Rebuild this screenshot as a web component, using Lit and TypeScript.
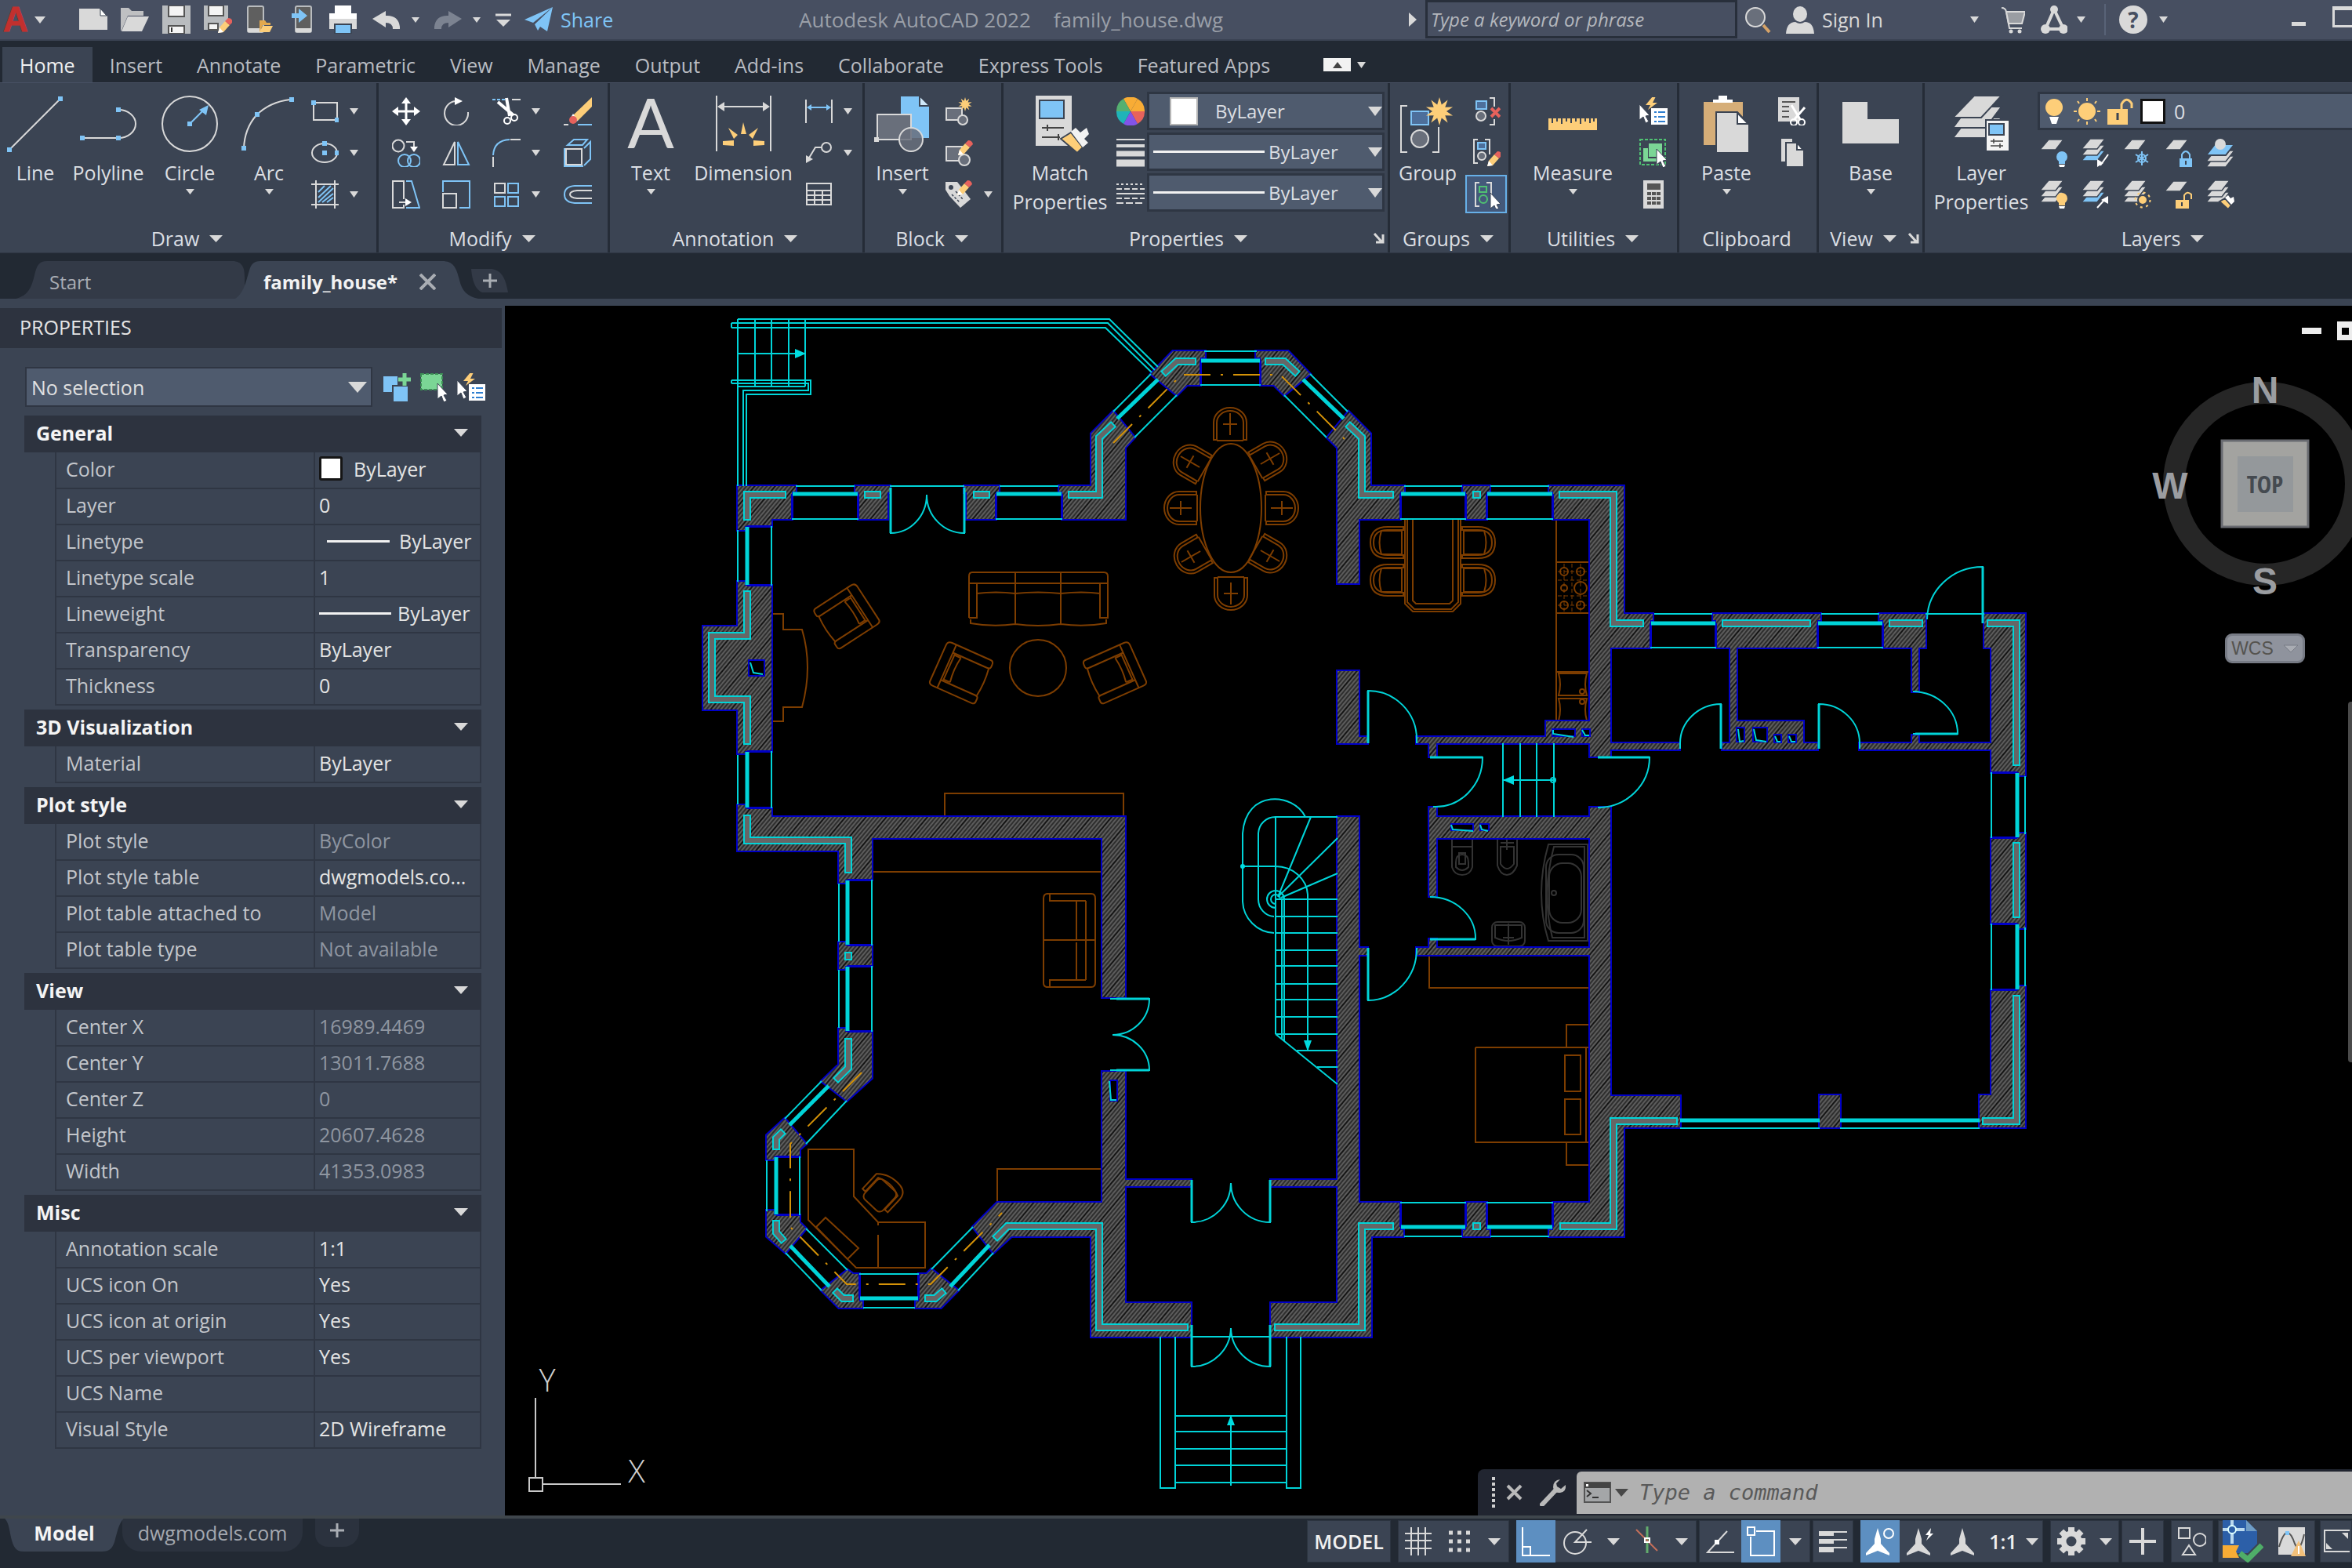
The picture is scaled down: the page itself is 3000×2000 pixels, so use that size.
import { LitElement, html, svg, css, nothing } from "lit";
import { customElement, state } from "lit/decorators.js";

const G = "#d9d9d9";
const B = "#7fc4f6";
const Y = "#fdce79";
const R = "#e6625c";
const N = "#63ad6d";
const M = "#696f7b";
const D = "#3b4453";

const icon = (body: unknown, w = 36, h = w) =>
  html`<svg class="icon" width=${w} height=${h} viewBox="0 0 ${w} ${h}" fill="none" stroke=${G} stroke-width="2" aria-hidden="true">${body}</svg>`;

const sq = (x: number, y: number) => svg`<rect x=${x - 3} y=${y - 3} width="6" height="6" fill=${B} stroke="none"/>`;
const arrow = (w = 12, h = 8) =>
  html`<svg class="arrow" width=${w} height=${h} viewBox="0 0 12 8" preserveAspectRatio="none" aria-hidden="true"><path d="M0 0H12L6 8Z" fill=${G}/></svg>`;
const cursor = (x: number, y: number) =>
  svg`<path transform="translate(${x} ${y})" d="M0 0L13 14L8 15L12 22L8 24L5 16L0 20Z" fill="#fff" stroke=${D} stroke-width="1"/>`;
const pencil = (x: number, y: number) =>
  svg`<g transform="translate(${x} ${y})" stroke="none"><path d="M0 18L2 11L9 3L15 8L7 17Z" fill=${Y}/><path d="M9 3L13 -1Q18 -1 19 4L15 8Z" fill=${R}/><path d="M0 18L2 11L7 17Z" fill="#fff"/></g>`;
const burst = (x: number, y: number, r: number) => {
  const pts = Array.from({ length: 20 }, (_, i) => {
    const a = (i * Math.PI) / 10 - Math.PI / 2;
    const k = i % 2 ? r * 0.5 : r;
    return `${(x + k * Math.cos(a)).toFixed(1)},${(y + k * Math.sin(a)).toFixed(1)}`;
  }).join(" ");
  return svg`<polygon points=${pts} fill=${Y} stroke="none"/>`;
};
const sheet = (y: number, fill = G) => svg`<path d="M11 ${y}H30L20 ${y + 13}H0Z" fill=${fill} stroke=${D} stroke-width="1.5"/>`;
const stack = (last = G) => svg`${sheet(15, last)}${sheet(8)}${sheet(0)}`;
const bulb = (x: number, y: number, fill: string) =>
  svg`<g stroke="none"><circle cx=${x} cy=${y} r="7" fill=${fill}/><rect x=${x - 4} y=${y + 5} width="8" height="4" fill=${fill}/><path d="M${x - 4} ${y + 10}h8l-2 6h-4z" fill="#fff"/></g>`;

const large = {
  line: svg`<path d="M3 69L68 4"/>${sq(3, 69)}${sq(68, 4)}`,
  polyline: svg`<path d="M3 54H49A22 18 0 0 0 49 18"/>${sq(3, 54)}${sq(49, 54)}${sq(49, 18)}`,
  circle: svg`<circle cx="36" cy="36" r="35"/><path d="M36 36L54 18" stroke=${B}/><path d="M60 12L57 25L48 18Z" fill=${B} stroke="none"/>${sq(36, 36)}`,
  arc: svg`<path d="M4 67Q5 42 20 25Q37 8 63 5"/>${sq(4, 67)}${sq(21, 24)}${sq(65, 5)}`,
  text: svg`<text x="36" y="67" text-anchor="middle" class="big-a">A</text>`,
  dimension: svg`<path d="M2 0V71M71 0V71M6 14H67"/><path d="M3 14L12 8V20ZM70 14L61 8V20Z" fill=${G} stroke="none"/><path d="M36 34L40 49H33ZM17 41L29 50L24 55ZM55 41L43 50L48 55ZM10 58L24 57V64L10 63ZM63 58L49 57V64L63 63Z" fill=${Y} stroke="none"/>`,
  insert: svg`<path d="M33 0H58L71 13V55H33Z" fill=${B} stroke=${D}/><path d="M58 0V13H71Z" fill="#cfe8f9" stroke=${D}/><rect x="4" y="24" width="43" height="32" fill=${M}/><rect x="0" y="53" width="6" height="6" fill=${G} stroke="none"/><circle cx="47" cy="56" r="15" fill=${M} fill-opacity=".85"/>`,
  match: svg`<rect x="5" y="0" width="46" height="64" fill=${G} stroke="none"/><rect x="10" y="6" width="31" height="23" fill=${B} stroke=${D}/><path d="M13 41H41M20 37V45M13 53H36M34 49V57" stroke="#444"/><path d="M37 55L50 47L65 66L58 73Z" fill=${Y} stroke=${D}/><path d="M50 46L56 41L62 47L70 41L73 49L67 55L72 60L65 66Z" fill="#f2f2f2" stroke="none"/>`,
  group: svg`<path d="M10 13H2V72H10M42 72H50V40"/><rect x="15" y="20" width="22" height="17" fill="#4d6f9b" stroke=${B}/>${burst(51, 20, 18)}<circle cx="26" cy="55" r="11" fill=${M}/>`,
  measure: svg`<rect x="5" y="29" width="62" height="15" fill=${Y} stroke="none"/><path d="M10 29v6M16 29v4M22 29v7M28 29v4M34 29v6M40 29v4M46 29v7M52 29v4M58 29v6M63 29v4" stroke=${D}/>`,
  paste: svg`<path d="M7 8H57V63H7Z" fill="#d6ae78" stroke="none"/><path d="M19 9V5H26V0H37V5H44V9Z" fill="#fff" stroke="none"/><path d="M23 21H50L65 37V73H23Z" fill=${G} stroke=${D}/><path d="M50 22V36H64Z" fill="#fff" stroke=${D}/>`,
  base: svg`<path d="M0 8H32V30H72V61H0Z" fill=${G} stroke="none"/>`,
  layers: svg`<g stroke=${D} fill=${G}><path d="M20 28H62L42 54H0Z"/><path d="M20 14H62L42 41H0Z"/><path d="M27 0H62L36 28H0Z"/></g><rect x="42" y="31" width="30" height="40" fill="#f4f4f4" stroke=${D}/><rect x="46" y="36" width="19" height="14" fill=${B} stroke=${D}/><path d="M48 58H64M52 55V61M48 64H64M60 61V67" stroke="#444" stroke-width="1.5"/>`,
};

const small = {
  rect: svg`<rect x="4" y="7" width="30" height="22"/>${sq(4, 7)}${sq(34, 29)}`,
  ellipse: svg`<ellipse cx="18" cy="18" rx="16" ry="12"/>${sq(18, 6)}${sq(34, 18)}${sq(18, 18)}`,
  hatch: svg`<path d="M7 0V36M31 0V36M1 5H36M1 31H36"/><path d="M10 15L18 7M10 22L26 7M10 28L29 10M15 28L29 17M21 28L29 22" stroke=${B}/>`,
  move: svg`<path d="M18 5V31M5 18H31" stroke="#fff" stroke-width="3"/><path d="M18 0L24 8H12ZM18 36L24 28H12ZM0 18L8 12V24ZM36 18L28 12V24Z" fill="#fff" stroke="none"/>`,
  rotate: svg`<path d="M17 5A15 15.500 0 1 0 33 19"/><path d="M16 0L26 5L16 10Z" fill="#fff" stroke="none"/>`,
  trim: svg`<path d="M0 3H18" stroke=${B} stroke-dasharray="4 2"/><path d="M25 3H36"/><path d="M18 1L22 24M7 6L27 23" stroke="#fff" stroke-width="4"/><circle cx="19" cy="30" r="4" stroke="#fff"/><circle cx="28" cy="26" r="4" stroke="#fff"/>`,
  erase: svg`<path d="M0 35H6"/><path d="M18 35H36" stroke=${B}/><path d="M36 0V12L18 30L12 23Z" fill=${Y} stroke="none"/><path d="M12 21L18 30L14 32L9 26Z" fill="#fff" stroke="none"/><circle cx="12" cy="29" r="5" fill=${R} stroke="none"/>`,
  copy: svg`<circle cx="8" cy="9" r="7.500"/><path d="M18 4H28V10"/><path d="M28 17L23 10H33Z" fill="#fff" stroke="none"/><circle cx="16" cy="28" r="8" stroke=${B}/><circle cx="28" cy="28" r="8" stroke=${B}/>`,
  mirror: svg`<path d="M16 4V33H2Z"/><path d="M20 4V33H34Z" stroke=${B}/>`,
  fillet: svg`<path d="M1 23V36M23 1H36"/><path d="M1 21Q2 2 22 1" stroke=${B}/>`,
  box: svg`<rect x="3" y="13" width="20" height="20"/><path d="M0 35H25M1 12V34M5 8L13 1H30L24 8ZM26 12L34 4V26L26 34" stroke=${B}/>`,
  stretch: svg`<path d="M15 24V1H1V35H15V31M9 28H18"/><path d="M17 23L25 28L17 33Z" fill="#fff" stroke="none"/><path d="M18 1H25L35 35H18" stroke=${B}/>`,
  scale: svg`<path d="M1 15V1H35V35H22" stroke=${B}/><rect x="1" y="17" width="17" height="18"/>`,
  array: svg`<rect x="3" y="4" width="13" height="12"/><g stroke=${B}><rect x="20" y="4" width="13" height="12"/><rect x="3" y="21" width="13" height="12"/><rect x="20" y="21" width="13" height="12"/></g>`,
  offset: svg`<path d="M36 7H14Q1 8 1 18T14 29H36" stroke=${B}/><path d="M36 13H17Q8 14 8 18T17 23H36"/>`,
  linear: svg`<path d="M2 3V33M35 3V33"/><path d="M6 13H31" stroke=${B}/><path d="M3 13L9 9V17ZM34 13L28 9V17Z" fill=${B} stroke="none"/>`,
  leader: svg`<circle cx="28" cy="11" r="6"/><path d="M22 11H14L5 26"/><path d="M2 31V21L11 26Z" fill=${G} stroke="none"/>`,
  table: svg`<rect x="3" y="4" width="31" height="27"/><path d="M3 13H34M3 19H34M3 25H34M13 13V31M23 13V31"/>`,
  blockNew: svg`<rect x="2" y="14" width="20" height="15" fill=${M}/>${burst(26, 9, 9)}<circle cx="23" cy="29" r="6" fill=${M}/>`,
  blockEdit: svg`<rect x="2" y="10" width="20" height="18" fill=${M}/><circle cx="25" cy="27" r="7" fill=${M}/>${pencil(17, 3)}`,
  tag: svg`<path d="M1 2H16L33 24L20 35L6 20L1 12Z" fill=${G} stroke="none"/><circle cx="8" cy="9" r="3" fill=${D} stroke="none"/><path d="M9 18l10 10M14 14l9 10" stroke=${D} stroke-width="1.5" stroke-dasharray="3 2"/>${pencil(16, 1)}`,
  wheel: svg`<g stroke="none"><path d="M18 18L9 2A18 18 0 0 1 27 2Z" fill="#f8ac35"/><path d="M18 18L27 2A18 18 0 0 1 36 18Z" fill="#f8ac35"/><path d="M18 18H36A18 18 0 0 1 27 34Z" fill=${R}/><path d="M18 18L27 34A18 18 0 0 1 9 34Z" fill="#8254e8"/><path d="M18 18L9 34A18 18 0 0 1 0 18Z" fill="#1fb4b8"/><path d="M18 18H0A18 18 0 0 1 9 2Z" fill="#55b070"/></g>`,
  weights: svg`<path d="M0 1H36"/><path d="M0 9H36" stroke-width="4"/><path d="M0 19H36" stroke-width="7"/><path d="M0 31H36" stroke-width="9"/>`,
  types: svg`<path d="M0 5H36" stroke-dasharray="3 3"/><path d="M0 11H36M0 23H36" stroke-dasharray="7 3"/><path d="M0 17H36"/><path d="M0 29H36" stroke-dasharray="9 3"/>`,
  ungroup: svg`<rect x="5" y="5" width="13" height="10" fill="#4d6f9b" stroke=${B}/><circle cx="11" cy="24" r="6" fill=${M}/><path d="M22 1H28V12M28 28V35H22"/><path d="M24 14L35 25M35 14L24 25" stroke=${R} stroke-width="4"/>`,
  groupEdit: svg`<path d="M7 1H2V31H7M16 1H22V20"/><rect x="7" y="5" width="10" height="8" fill="#4d6f9b" stroke=${B}/><circle cx="12" cy="22" r="5" fill=${M}/>${pencil(19, 17)}`,
  groupPick: svg`<path d="M9 3H4V33H9M18 3H24V20"/><rect x="9" y="8" width="9" height="7" stroke="#4fc172"/><circle cx="14" cy="24" r="5" stroke="#4fc172"/>${cursor(23, 16)}`,
  quick: svg`<path d="M14 0L5 11H11L8 17L20 8H14L18 0Z" transform="translate(3 -1)" fill=${Y} stroke="none"/>${cursor(0, 9)}<rect x="15" y="14" width="21" height="21" fill="#fff" stroke="none"/><path d="M19 19h3M19 25h3M19 31h3M24 19h9M24 25h9M24 31h9" stroke="#2f7fd0"/>`,
  selectAll: svg`<rect x="1" y="1" width="32" height="32" stroke="#4fc172" stroke-dasharray="4 2"/><path d="M5 12H11V25H22V29H5Z" fill="#7bd695" stroke="none"/><rect x="12" y="6" width="17" height="17" fill="#7bd695" stroke="none"/>${cursor(22, 13)}`,
  calc: svg`<rect x="5" y="0" width="26" height="36" fill=${G} stroke="none"/><rect x="10" y="4" width="17" height="8" fill="#555" stroke="none"/><path d="M10 17H27M10 23H27M10 29H27" stroke="#555" stroke-width="4" stroke-dasharray="5 1"/>`,
  cut: svg`<rect x="0" y="0" width="27" height="31" fill=${G} stroke="none"/><path d="M5 6H22M5 12H14M5 18H14M5 25H14" stroke="#555"/><path d="M17 10L28 28M34 13L21 28" stroke="#fff" stroke-width="3"/><circle cx="20" cy="32" r="4" stroke="#fff"/><circle cx="30" cy="32" r="4" stroke="#fff"/>`,
  copyClip: svg`<path d="M4 0H18V5H9V29H4Z" fill=${G} stroke="none"/><path d="M10 5H24L33 15V36H10Z" fill=${G} stroke=${D}/><path d="M24 5V14H32Z" fill="#fff" stroke=${D}/>`,
  layOff: svg`${sheet(1)}${bulb(28, 23, B)}`,
  layIso: svg`${stack(B)}<path d="M34 20L24 34" stroke="#fff"/><path d="M20 36V26L28 31Z" fill="#fff" stroke="none"/>`,
  layFreeze: svg`${sheet(1)}<path d="M24 16V34M16 20L32 30M32 20L16 30" stroke=${B}/><circle cx="24" cy="25" r="5" stroke=${B}/>`,
  layLock: svg`${sheet(1)}<rect x="19" y="25" width="16" height="11" fill=${B} stroke="none"/><path d="M22 25V20Q27 12 32 20V25" stroke=${B}/><path d="M27 28V33" stroke=${D}/>`,
  layCurrent: svg`<g fill=${G} stroke=${D} stroke-width="1.500"><path d="M11 22H36L25 36H0Z"/><path d="M11 15H36L25 29H0Z"/></g><path d="M11 7H36L25 21H0Z" fill=${B} stroke=${D}/><circle cx="18" cy="7" r="7" fill=${G} stroke="none"/>`,
  layOn: svg`${stack()}${bulb(28, 23, Y)}`,
  layUniso: svg`${stack(B)}<path d="M20 35L30 24" stroke="#fff"/><path d="M34 20V30L25 25Z" fill="#fff" stroke="none"/>`,
  layThaw: svg`${stack()}<circle cx="25" cy="25" r="6" fill=${Y} stroke=${D}/><circle cx="25" cy="25" r="9.500" stroke=${Y} stroke-dasharray="3 4.500"/>`,
  layUnlock: svg`${sheet(1)}<rect x="14" y="25" width="17" height="11" fill=${Y} stroke="none"/><path d="M25 25V19Q29 13 34 18V24" stroke=${Y}/><path d="M22 28V33" stroke=${D}/>`,
  layMatch: svg`${stack()}<path d="M17 27L24 23L32 32L28 37Z" fill=${Y} stroke=${D}/><path d="M24 22L28 19L31 23L35 21L36 27L32 31Z" fill="#fff" stroke="none"/>`,
};

const title = {
  new: svg`<path d="M0 4H26L36 14V31H0Z" fill=${G} stroke="none"/><path d="M27 4V13H35Z" fill="#fff" stroke=${D} stroke-width="1"/>`,
  open: svg`<path d="M0 32V3H10L14 7H29V13H9L1 32Z" fill="#bfc0c2" stroke="none"/><path d="M9 14H36L27 33H1Z" fill=${G} stroke="none"/>`,
  save: svg`<path d="M0 0H36V36H0Z" fill="#b9bcbf" stroke="none"/><rect x="8" y="0" width="20" height="14" fill="#f4f4f4" stroke="#555"/><rect x="8" y="26" width="20" height="10" fill="#f4f4f4" stroke="#555"/><path d="M12 28V34" stroke="#333"/>`,
  saveAs: svg`<path d="M0 0H31V20L18 31H0Z" fill="#b9bcbf" stroke="none"/><rect x="6" y="0" width="19" height="13" fill="#f4f4f4" stroke="#555"/><rect x="6" y="23" width="12" height="8" fill="#f4f4f4" stroke="#555"/>${pencil(18, 17)}`,
  mobileOpen: svg`<rect x="3" y="1" width="20" height="33" rx="2" fill="#5f5f5f" stroke="#b9bcbf"/><path d="M3 29H20V34H3Z" fill=${G} stroke="none"/><path d="M18 19H25L27 22H32V25H22L18 34Z" fill="#e2a84e" stroke="none"/><path d="M22 26H35L31 34H18Z" fill=${Y} stroke="none"/>`,
  mobileSave: svg`<rect x="11" y="1" width="20" height="33" rx="2" fill="#5f5f5f" stroke="#b9bcbf"/><path d="M11 29H31V34H11Z" fill=${G} stroke="none"/><path d="M6 10H15V4L26 13L15 22V16H6Z" fill=${B} stroke="none"/>`,
  print: svg`<rect x="8" y="0" width="21" height="12" fill="#fff" stroke="none"/><rect x="1" y="10" width="36" height="20" fill=${G} stroke="none"/><path d="M1 10H37V17H1Z" fill="#fff" stroke="none"/><rect x="8" y="24" width="21" height="12" fill=${B} stroke=${D}/>`,
  undo: svg`<path d="M0 17L17 7V13Q33 12 35 27V30H26Q26 22 17 22V28Z" fill=${G} stroke="none"/>`,
  redo: svg`<path d="M36 17L19 7V13Q3 12 1 27V30H10Q10 22 19 22V28Z" fill="#7c8391" stroke="none"/>`,
  menu: svg`<path d="M0 12H20" stroke-width="3"/><path d="M1 18H19L10 27Z" fill=${G} stroke="none"/>`,
  share: svg`<path d="M36 2L0 18L11 22ZM36 2L13 24L17 32L20 27L29 33Z" fill=${B} stroke="none"/>`,
  search: svg`<circle cx="13" cy="15" r="12" fill=${M}/><path d="M23 25L31 34" stroke="#d6a368" stroke-width="4"/>`,
  user: svg`<ellipse cx="18" cy="11" rx="9" ry="10" fill=${G} stroke="none"/><path d="M0 36Q1 21 12 21Q18 25 24 21Q35 21 36 36Z" fill=${G} stroke="none"/>`,
  cart: svg`<path d="M0 4Q5 4 6 9L10 30H26"/><path d="M6 9H30L26 24H9Z" fill="#9a9da3"/><circle cx="12" cy="34" r="2.500" fill=${G} stroke="none"/><circle cx="23" cy="34" r="2.500" fill=${G} stroke="none"/>`,
  apps: svg`<path d="M17 6L6 31H29Z" stroke-width="4"/><circle cx="17" cy="6" r="5" fill=${G} stroke="none"/><circle cx="6" cy="31" r="6" fill=${G} stroke="none"/><circle cx="29" cy="31" r="6" fill=${G} stroke="none"/>`,
};

const chevronBox = html`<svg width="10" height="18" viewBox="0 0 10 18" aria-hidden="true"><path d="M0 0L10 9L0 18Z" fill=${G} /></svg>`;

const launcher = icon(svg`<path d="M2 2L11 12M13 3V13H4" stroke-width="3"/>`, 16);

/* One ribbon tool with a caption under its picture. */
const tool = (cls: string, body: unknown, lines: string[], menu = false) =>
  html`<button class="tool ${cls}">${icon(body, 72)}<span class="cap">${lines.map((l) => html`<span>${l}</span>`)}</span>${menu ? arrow(11, 7) : nothing}</button>`;
const mini = (name: string, body: unknown, active = false) =>
  html`<button class=${active ? "mini active" : "mini"} aria-label=${name}>${icon(body)}</button>`;
const drop = (name: string) => html`<button class="drop" aria-label="${name} options">${arrow(11, 8)}</button>`;

const panel = (cls: string, name: string, content: unknown, menu = true, launch = false) => html`
  <section class="panel ${cls}">
    <div class="tools">${content}</div>
    <div class="panel-foot">
      <button class="panel-title">${name}${menu ? arrow(17, 9) : nothing}</button>
      ${launch ? html`<button class="launch" aria-label="${name} settings">${launcher}</button>` : nothing}
    </div>
  </section>`;

/* ---------- Floor plan ---------- */

const walls = [
  "M941 620H1015V627H1010V662H984V671H950V676H941Z",
  "M1091 620H1135V628H1132V662H1095V627H1091Z",
  "M1230 620H1274V627H1270V662H1233V628H1230Z",
  "M1351 620H1392V553L1420 525L1447 558L1435 571V662H1355V627H1351Z",
  "M1496 448H1537V456H1531V491H1514L1501 504L1468 477Z",
  "M1643 448H1602V456H1608V491H1625L1638 504L1671 477Z",
  "M1720 525L1748 553V620H1791V627H1786V662H1733V744H1706V571L1693 558Z",
  "M1866 620H1900V627H1896V662H1870V627H1866Z",
  "M1976 620H2071V783H2108V791H2105V826H2054V965H2028V662H1981V627H1976Z",
  "M2185 783H2322V791H2318V826H2189V791H2185Z",
  "M2397 783H2456V826H2402V791H2397Z",
  "M2531 783H2583V989H2575V985H2540V826H2531Z",
  "M2583 1063V1184H2575V1178H2540V1069H2575V1063Z",
  "M2583 1258V1438H2525V1397H2540V1263H2575V1258Z",
  "M2321 1397H2347V1438H2321Z",
  "M2028 1030H2054V1398H2143V1438H2071V1577H1976V1569H1981V1534H2028Z",
  "M1870 1534H1896V1569H1900V1577H1866V1569H1870Z",
  "M1706 1042H1733V1534H1786V1569H1790V1577H1749V1705H1621V1662H1706Z",
  "M1406 1367H1435V1662H1519V1705H1392V1577H1290L1267 1598L1241 1565L1272 1534H1406Z",
  "M941 1027H950V1031H984V1042H1435V1272H1406V1069H1112V1122H1078V1126H1070V1085H941Z",
  "M1070 1202H1078V1206H1112V1232H1078V1236H1070Z",
  "M1070 1312H1078V1316H1112V1375L1080 1404L1048 1379L1070 1358Z",
  "M1001 1427L1028 1459L1020 1466V1475H987V1479H978V1448Z",
  "M978 1544H987V1550H1020V1559L1028 1567L1002 1598L978 1577Z",
  "M1081 1620L1088 1625H1096V1660H1100V1668H1070L1048 1646Z",
  "M1188 1619L1182 1625H1172V1660H1168V1668H1200L1222 1646Z",
  "M941 742H950V747H984V958H950V961H941V905H897V799H941Z",
  "M1706 856H1733V940H1744V948H1706Z",
  "M1807 940H1972V920H2028V948H1832V965H1823V948H1807Z",
  "M2054 948H2142V956H2054Z",
  "M2207 826H2215V920H2300V948H2318V956H2197V948H2207Z",
  "M2372 948H2439V938H2447V948H2540V956H2372Z",
  "M2439 826H2447V882H2439Z",
  "M1823 1030H1832V1042H2028V1069H1832V1143H1823Z",
  "M1807 1209H1823V1198H1832V1209H2028V1218H1807Z",
  "M1733 1209H1744V1218H1733Z",
  "M1435 1505H1519V1513H1435Z",
  "M1621 1505H1706V1513H1621Z",
].join("");

const insulation = [
  "M998 631H953V659", "M1107 631H1119", "M1246 631H1258", "M1367 631H1402V558L1417 544",
  "M1487 474L1501 461H1521", "M1652 474L1638 461H1618", "M1722 544L1737 558V631H1773",
  "M1883 631h1", "M1993 631H2058V795H2092", "M2201 795H2305", "M2414 795H2448",
  "M2539 795H2572V972", "M2572 1079V1166", "M2572 1274V1430H2533", "M2135 1430H2058V1564H1994",
  "M1883 1564h1", "M1773 1564H1737V1693H1630", "M1511 1693H1402V1564H1285L1272 1577",
  "M953 1044V1072H1082V1109", "M1082 1219v1", "M1082 1329V1362L1069 1375", "M996 1446L990 1452V1462",
  "M990 1561V1572L997 1580", "M1068 1649L1075 1656H1084", "M1184 1656H1193L1201 1649",
  "M953 758V811H908V892H953V945",
].join("");

/* Horizontal windows: left, right, outer face, glass, inner face. */
const windowsH = [
  [1010, 1095, 620, 630, 662], [1270, 1355, 620, 630, 662], [1531, 1608, 448, 460, 491],
  [1786, 1870, 620, 630, 662], [1896, 1981, 620, 630, 662], [2105, 2189, 783, 795, 826],
  [2318, 2402, 783, 795, 826], [1786, 1870, 1577, 1565, 1534], [1896, 1981, 1577, 1565, 1534],
  [1096, 1172, 1668, 1656, 1625],
];
/* Vertical windows: top, bottom, outer face, glass, inner face. */
const windowsV = [
  [671, 747, 941, 953, 984], [958, 1031, 941, 953, 984], [1122, 1206, 1070, 1081, 1112],
  [1232, 1316, 1070, 1081, 1112], [1475, 1550, 978, 990, 1020], [985, 1069, 2583, 2573, 2540],
  [1178, 1263, 2583, 2573, 2540],
];

const glassLines =
  windowsH.map(([a, b, o, , i]) => `M${a + 5} ${o}H${b - 5}M${a} ${i}H${b}`).join("") +
  windowsV.map(([a, b, o, , i]) => `M${o} ${a + 5}V${b - 5}M${i} ${a}V${b}`).join("") +
  "M1420 525L1468 477M1447 558L1501 504M1719 525L1671 477M1692 558L1638 504" +
  "M1048 1379L1001 1427M1080 1404L1028 1459M1002 1598L1048 1646M1028 1567L1081 1620M1267 1598L1222 1646M1241 1565L1188 1619";
const glassPanes =
  windowsH.map(([a, b, , m]) => `M${a + 1} ${m}H${b - 1}`).join("") +
  windowsV.map(([a, b, , m]) => `M${m} ${a + 1}V${b - 1}`).join("") +
  "M1425 534L1477 484M1714 534L1662 484M1057 1385L1007 1435M1008 1589L1058 1641M1262 1588L1212 1641M2143 1429H2321M2347 1429H2525";
const reveals =
  windowsH.map(([a, b, , m, i]) => `M${a} ${m}V${i}M${b} ${m}V${i}`).join("") +
  windowsV.map(([a, b, , m, i]) => `M${m} ${a}H${i}M${m} ${b}H${i}`).join("");

const doors =
  "M1135 620H1230M1136 631V680A46 49 0 0 0 1182 631A48 49 0 0 0 1230 680V631" +
  "M1520 1509V1559A50 50 0 0 0 1570 1509A50 50 0 0 0 1620 1559V1509" +
  "M1520 1705H1620M1520 1694V1743A50 50 0 0 0 1570 1694A50 50 0 0 0 1620 1743V1694" +
  "M1416 1274H1466A47 46 0 0 1 1419 1320A47 45 0 0 1 1466 1365H1416" +
  "M1745 947V881A62 62 0 0 1 1807 943V948M1824 966H1891A60 63 0 0 1 1828 1029M2040 966H2104A66 64 0 0 1 2038 1030" +
  "M2195 955V898A53 50 0 0 0 2143 948V955M2320 955V898A52 50 0 0 1 2372 948V955" +
  "M2440 882A58 54 0 0 1 2497 936H2440M2529 795V723A71 68 0 0 0 2458 790M2456 783H2531" +
  "M1824 1144A58 53 0 0 1 1882 1198H1824M1745 1209V1276A62 66 0 0 0 1807 1209";
const leaves =
  "M1136 622V680M1230 622V680M1520 1505V1559M1620 1505V1559M1520 1690V1743M1620 1690V1743M1424 1274H1466M1424 1365H1466" +
  "M1745 948V881M1824 966H1891M2038 966H2104M2195 955V898M2320 955V898M2443 936H2497M2529 795V723M1824 1198H1882M1745 1209V1276";

const treads = [1147, 1169, 1190, 1212, 1232, 1255, 1275, 1297, 1319].map((y) => `M1627 ${y}H1706`).join("");
const stairs =
  "M941 407H1415L1477 468M933 412H1413L1473 472M933 418H1410L1469 475M933 412V418" +
  "M941 407V620M963 407V493M984 407V493M1006 407V493M1027 407V493M941 493H1027M941 451H1027" +
  "M933 485H1034V503H952V620M933 489H1031V498H948V620M933 485V489" +
  "M1480 1705V1898H1499V1705M1641 1705V1898H1659V1705M1499 1806H1641M1499 1826H1641M1499 1848H1641M1499 1869H1641M1499 1891H1641M1570 1895V1806" +
  "M1917 948V1042M1939 948V1042M1960 948V1042M1982 948V1042M1917 995H1982" +
  "M1665 1042C1650 1011 1589 1006 1585 1063V1150A42 42 0 0 0 1625 1190M1706 1042H1627A22 22 0 0 0 1605 1063V1147A21 22 0 0 0 1625 1169" +
  "M1627 1042V1319M1635 1147V1325M1638 1147V1328M1654 1340H1706M1680 1361H1706M1627 1319L1706 1383" +
  "M1630 1144L1672 1042M1630 1144L1706 1069M1634 1145L1706 1114M1585 1105H1627A41 38 0 0 1 1668 1141V1340" +
  "M1638 1147A11 11 0 1 0 1627 1158M1633 1147A6 6 0 1 0 1627 1153" + treads;

const chair = (x: number, y: number, a: number) => svg`<g transform="translate(${x} ${y}) rotate(${a})">
  <path d="M-21 20V-2A21 19 0 0 1 21 -2V20H17V-2A17 15 0 0 0 -17 -2V20Z"/>
  <path d="M-17 21H17M0 -14V14M-9 0H9"/></g>`;
const armchair = (t: string) => svg`<g transform=${t}>
  <path d="M-32 -24Q-32 -30 -26 -30H28Q32 -30 32 -25V-22Q32 -19 28 -19H-20M-32 -24V26Q-32 30 -26 30H28Q32 30 32 26V22Q32 19 28 19H-20"/>
  <path d="M-20 -30V30M-17 -19V19M-8 -17Q-11 0 -8 17M-17 -17H-8M-17 17H-8M30 -19Q33 0 30 19"/></g>`;
const kitchenChair = (x: number, y: number, flip: number) => svg`<g transform="translate(${x} ${y}) scale(${flip} 1)">
  <path d="M0 -20H-20Q-42 -20 -42 0T-20 20H0V16H-20Q-38 16 -38 0T-20 -16H0Z"/><path d="M-2 -15H-28Q-33 0 -28 15H-2Z"/></g>`;

const furniture = svg`<g class="furniture">
  <ellipse cx="1570" cy="648" rx="39" ry="82"/>
  ${[[1569, 541, 0], [1570, 757, 180], [1506, 648, -90], [1635, 648, 90], [1518, 589, -60], [1620, 585, 60], [1519, 710, -120], [1620, 709, 120]].map(([x, y, a]) => chair(x, y, a))}
  <path d="M1240 730H1408Q1413 730 1413 735V788H1403V744M1236 788V735Q1236 730 1240 730M1236 788H1246V744M1236 744H1413M1295 730V797M1353 730V797M1238 790V795Q1266 800 1295 796Q1324 800 1353 796Q1382 800 1411 795V790M1246 757Q1270 754 1295 757Q1324 754 1353 757Q1380 754 1403 757"/>
  ${armchair("translate(1226 858) rotate(24)")}${armchair("translate(1422 858) rotate(-24) scale(-1 1)")}${armchair("translate(1080 786) rotate(-33) scale(-1 1)")}
  <circle cx="1324" cy="852" r="36"/>
  <path d="M984 783H999V803H1023Q1037 850 1023 902H999V920H984M1205 1042V1012H1433V1042"/>
  <path d="M1792 662V770L1802 780H1853L1863 770V662M1795 662V768L1804 777H1851L1860 768V662M1802 662V766L1806 770H1849L1853 766V662"/>
  ${kitchenChair(1790, 692, 1)}${kitchenChair(1790, 740, 1)}${kitchenChair(1865, 692, -1)}${kitchenChair(1865, 740, -1)}
  <path d="M1985 662V920M1985 717H2028V782H1985M1985 857H2027V920H1985M1988 859H2024Q2020 873 2024 887H1988Q1992 873 1988 859ZM1988 891H2024Q2020 905 2024 919H1988Q1992 905 1988 891Z"/>
  <path d="M1987 740H2028M1987 760H2028M2005 719V781M1995 719V781M2016 719V781M1987 729H2028M1987 772H2028" stroke-dasharray="5 3" stroke-width="1"/>
  <circle cx="1995" cy="729" r="5"/><circle cx="2016" cy="729" r="5"/><circle cx="1995" cy="750" r="4"/><circle cx="2016" cy="750" r="8"/><circle cx="1995" cy="772" r="5"/><circle cx="2016" cy="772" r="5"/><circle cx="2018" cy="882" r="3"/><circle cx="2018" cy="895" r="3"/>
  <path d="M1823 1218V1260H2027M1882 1336H2028M1882 1336V1457H2028M2023 1336V1457M1996 1346H2016V1392H1996ZM1996 1402H2016V1447H1996ZM2028 1307H1998V1336M1998 1457V1486H2028"/>
  <path d="M1112 1112H1406M1272 1534V1491H1406M1335 1140H1392Q1397 1140 1397 1146V1253Q1397 1259 1392 1259H1335Q1331 1258 1331 1254V1146Q1331 1141 1335 1140M1331 1199H1397M1339 1140V1149H1385M1339 1259V1250H1385M1385 1149V1250M1373 1150V1198M1373 1202V1249"/>
  <path d="M1031 1466H1089V1526L1120 1559H1180V1617H1092L1031 1556ZM1120 1559v4M1120 1575v42M1053 1553L1095 1592L1081 1606L1041 1565Z"/>
  <g transform="translate(1123 1524) rotate(43)"><rect x="-16" y="-16" width="32" height="34" rx="6"/><path d="M-22 10V-16Q-10 -28 10 -26Q22 -24 22 -12V10H17V-14Q0 -22 -17 -14V10Z"/></g>
</g>`;

const sanitary = svg`<g class="sanitary">
  <path d="M1852 1070H1878V1080H1852ZM1852 1080V1106Q1855 1116 1865 1116T1878 1106V1080M1857 1100Q1857 1090 1865 1090T1873 1100V1106Q1865 1114 1857 1106ZM1861 1088H1869V1102H1861Z"/>
  <path d="M1910 1070H1935V1104Q1930 1116 1922 1116T1910 1104ZM1914 1080H1931V1102Q1922 1114 1914 1102ZM1922 1070V1084M1914 1075H1931"/>
  <path d="M2025 1077H1975Q1957 1140 1975 1200H2025ZM2021 1080H1982Q1966 1140 1980 1196H2021Z"/><rect x="1976" y="1101" width="41" height="76" rx="17"/><rect x="1972" y="1090" width="48" height="100" rx="16"/><circle cx="1982" cy="1139" r="3"/>
  <rect x="1903" y="1176" width="42" height="31" rx="7"/><path d="M1907 1180H1941V1196Q1924 1204 1907 1196ZM1924 1178V1205M1917 1196H1931"/>
</g>`;

const shafts =
  "M955 842H975V862H955ZM1980 930H2009V939H1980ZM2018 930H2028V939H2018ZM2215 928H2225V946H2215ZM2236 928H2254V946H2236ZM2263 937H2272V947H2263ZM2281 937H2291V947H2281ZM1851 1051H1879V1059H1851ZM1888 1051H1899V1059H1888ZM1416 1378H1425V1404H1416Z";
const shaftMarks =
  "M957 845L961 858L973 860M1981 931V936L2007 940M2018 931L2022 938H2027M2217 930L2219 946L2224 945M2237 930L2240 944L2253 946M2264 939L2267 946H2271M2282 939L2285 946H2290M1851 1052L1853 1058L1879 1060M1888 1052L1890 1058L1898 1060M1415 1379L1417 1403H1424";

const plan = html`<svg class="plan" viewBox="644 390 2356 1543" preserveAspectRatio="xMinYMin meet" role="img" aria-label="Ground floor plan of family_house">
  <defs>
    <pattern id="brick" width="20" height="20" patternUnits="userSpaceOnUse" patternTransform="rotate(40)">
      <rect width="20" height="20" fill="#2e2e2e"/>
      <path d="M2 0V20M6 0V20M10 0V20M14 0V20M18 0V20" stroke="#5c5c5c" stroke-width="2"/>
      <path d="M16 0V20" stroke="#141414" stroke-width="2"/>
    </pattern>
    <path id="walls" d=${walls} />
    <path id="insulation" d=${insulation} />
  </defs>
  <g fill="none" stroke-width="2">
    ${furniture}${sanitary}
    <use href="#walls" stroke="#0000c8" stroke-width="4"/>
    <use href="#walls" fill="url(#brick)"/>
    <path d=${reveals} stroke="#0000c8"/>
    <path d=${shafts} fill="#000" stroke="#0000c8"/>
    <path d=${shaftMarks} class="line"/>
    <use href="#insulation" class="line" stroke-width="10" stroke-linecap="square"/>
    <use href="#insulation" stroke="#666" stroke-width="6" stroke-linecap="square"/>
    <path d="M1420 565L1507 478H1633L1720 565M1099 1368L1008 1459V1565L1080 1638H1187L1278 1547" stroke="#d49208" stroke-dasharray="34 13 3 13"/>
    <path class="line" d=${glassLines}/>
    <path class="line" d=${glassPanes} stroke-width="5"/>
    <path class="line" d="M2143 1439H2321M2347 1439H2525"/>
    <path class="line" d=${doors}/>
    <path class="line" d=${leaves} stroke-width="3"/>
    <path class="line" d=${stairs}/>
    <path fill="#00dce0" d="M1028 451L1014 445V457ZM1917 995L1931 989V1001ZM1668 1341L1663 1327H1673ZM1570 1805L1565 1818H1575Z"/>
    <circle cx="1585" cy="1105" r="3" fill="#00dce0"/><circle cx="1981" cy="995" r="3" class="line"/>
  </g>
  <g fill="none" stroke="#c8c8c8" stroke-width="2"><path d="M683 1783V1893H792"/><rect x="675" y="1885" width="17" height="17" fill="#000"/></g>
  <text class="axis" x="698" y="1775" text-anchor="middle">Y</text>
  <text class="axis" x="812" y="1891" text-anchor="middle">X</text>
</svg>`;

/* ---------- Property palette data ---------- */

type Mark = "swatch" | "short" | "long";
interface Row { name: string; value: string; mark?: Mark; dim?: boolean }
const sections: { name: string; rows: Row[] }[] = [
  { name: "General", rows: [
    { name: "Color", value: "ByLayer", mark: "swatch" },
    { name: "Layer", value: "0" },
    { name: "Linetype", value: "ByLayer", mark: "short" },
    { name: "Linetype scale", value: "1" },
    { name: "Lineweight", value: "ByLayer", mark: "long" },
    { name: "Transparency", value: "ByLayer" },
    { name: "Thickness", value: "0" },
  ] },
  { name: "3D Visualization", rows: [{ name: "Material", value: "ByLayer" }] },
  { name: "Plot style", rows: [
    { name: "Plot style", value: "ByColor", dim: true },
    { name: "Plot style table", value: "dwgmodels.co..." },
    { name: "Plot table attached to", value: "Model", dim: true },
    { name: "Plot table type", value: "Not available", dim: true },
  ] },
  { name: "View", rows: [
    { name: "Center X", value: "16989.4469", dim: true },
    { name: "Center Y", value: "13011.7688", dim: true },
    { name: "Center Z", value: "0", dim: true },
    { name: "Height", value: "20607.4628", dim: true },
    { name: "Width", value: "41353.0983", dim: true },
  ] },
  { name: "Misc", rows: [
    { name: "Annotation scale", value: "1:1" },
    { name: "UCS icon On", value: "Yes" },
    { name: "UCS icon at origin", value: "Yes" },
    { name: "UCS per viewport", value: "Yes" },
    { name: "UCS Name", value: "" },
    { name: "Visual Style", value: "2D Wireframe" },
  ] },
];

const base = css`
  :host, * { box-sizing: border-box; }
  button, select, input { font: inherit; color: inherit; background: none; border: 0; padding: 0; margin: 0; border-radius: 0; }
  button { display: flex; align-items: center; justify-content: center; flex: none; white-space: nowrap; }
  svg { display: block; flex: none; }
  select { appearance: none; min-width: 0; flex: 1; }
`;

@customElement("title-bar")
class TitleBar extends LitElement {
  static styles = [base, css`
    :host { display: flex; height: 52px; background: #474f61; border-bottom: 2px solid #3b4353; font-size: 25px; color: #d9d9d9; overflow: hidden; }
    .row { display: flex; align-items: center; flex: none; }
    .files { gap: 17px; padding-left: 37px; }
    .edit { padding-left: 20px; }
    .logo { width: 38px; }
    .mark { font: 700 44px/1 "Liberation Sans", Arial, sans-serif; fill: #c2302e; stroke: #c2302e; stroke-width: 1px; }
    .logo-menu { width: 26px; }
    .after { width: 38px; }
    .redo { margin-left: 4px; }
    .more { width: 30px; margin-right: 12px; }
    .share { gap: 10px; color: #7fc4f6; }
    .caption { flex: 1; justify-content: center; gap: 29px; color: #9a9fa8; min-width: 0; font-size: 26px; }
    .search { width: 398px; height: 49px; margin: 0 10px 2px 11px; border: 3px solid #282f3b; padding: 0 4px; font-style: italic; font-size: 24px; }
    .search::placeholder { color: #b4b7bd; opacity: 1; }
    .sign { gap: 10px; margin-left: 18px; width: 230px; justify-content: flex-start; }
    .d20 { width: 20px; margin-right: 25px; }
    .d34 { width: 34px; }
    .cart { margin-right: 20px; }
    .rule { width: 2px; height: 40px; margin: 0 17px 0 13px; background: #586377; }
    .help { width: 36px; height: 36px; border-radius: 18px; background: #d9d9d9; color: #474f61; font-weight: 700; font-size: 28px; }
    .d40 { width: 40px; }
    .windows { margin-left: 144px; gap: 34px; }
    .min { width: 18px; height: 5px; background: #d9d9d9; align-self: end; margin-bottom: 10px; }
    .max { width: 25px; height: 27px; border: 3px solid #d9d9d9; border-top-width: 5px; border-right: 0; margin-bottom: 8px; }
  `];
  render() {
    return html`
      <div class="row">
        <button class="logo" aria-label="Application menu"><svg width="36" height="50" viewBox="0 0 36 50"><text class="mark" x="19" y="40" text-anchor="middle">A</text></svg></button>
        <button class="logo-menu" aria-label="Application menu list">${arrow(14, 9)}</button>
      </div>
      <div class="row files">
        ${[["New", title.new], ["Open", title.open], ["Save", title.save], ["Save as", title.saveAs], ["Open from mobile", title.mobileOpen], ["Save to mobile", title.mobileSave], ["Plot", title.print]].map(
          ([n, b]) => html`<button aria-label=${n}>${icon(b)}</button>`)}
      </div>
      <div class="row edit">
        <button aria-label="Undo">${icon(title.undo)}</button><button class="after" aria-label="Undo list">${arrow(10, 7)}</button>
        <button class="redo" aria-label="Redo">${icon(title.redo)}</button><button class="after" aria-label="Redo list">${arrow(10, 7)}</button>
        <button class="more" aria-label="Customize toolbar">${icon(title.menu, 20, 36)}</button>
        <button class="share">${icon(title.share)}Share</button>
      </div>
      <div class="row caption"><span>Autodesk AutoCAD 2022</span><span>family_house.dwg</span></div>
      <div class="row">
        <button aria-label="Collapse search">${chevronBox}</button>
        <input class="search" type="text" aria-label="Search" placeholder="Type a keyword or phrase">
        <button aria-label="Search help">${icon(title.search, 34, 36)}</button>
        <button class="sign">${icon(title.user)}Sign In</button>
        <button class="d20" aria-label="Account list">${arrow(11, 8)}</button>
        <button class="cart" aria-label="Store">${icon(title.cart, 30, 38)}</button>
        <button aria-label="Apps">${icon(title.apps, 34, 38)}</button>
        <button class="d34" aria-label="Apps list">${arrow(11, 8)}</button>
        <span class="rule"></span>
        <button class="help" aria-label="Help">?</button>
        <button class="d40" aria-label="Help list">${arrow(11, 8)}</button>
        <div class="row windows"><button class="min" aria-label="Minimize"></button><button class="max" aria-label="Maximize"></button></div>
      </div>`;
  }
}

@customElement("ribbon-bar")
class RibbonBar extends LitElement {
  @state() private active = "Home";
  static styles = [base, css`
    :host { display: block; font-size: 25px; color: #dcdfe3; overflow: hidden; }
    .tabs { display: flex; align-items: flex-end; height: 53px; padding-left: 3px; background: #222933; }
    .tab { height: 45px; padding: 0 22px; color: #b9bcc2; }
    .tab.on { background: #3b4453; color: #f0f0f0; }
    .toggle { height: 45px; gap: 8px; margin-left: 46px; }
    .chip { display: flex; align-items: center; justify-content: center; width: 35px; height: 17px; background: #f2f2f2; }
    .panels { display: flex; background: #3b4453; border-top: 1px solid #485163; border-bottom: 1px solid #2e3643; height: 218px; }
    .panel { display: flex; flex-direction: column; flex: none; border-right: 3px solid #252c37; }
    .tools { display: flex; align-items: flex-start; height: 180px; }
    .panel-foot { display: flex; height: 36px; padding-right: 3px; }
    .panel-title { flex: 1; gap: 13px; }
    .launch { width: 16px; }
    .tool { flex-direction: column; justify-content: flex-start; padding-top: 16px; }
    .tool svg { overflow: visible; }
    .cap { display: flex; flex-direction: column; align-items: center; line-height: 37px; padding: 8px 0 2px; }
    .big-a { font: 400 88px/1 Lato, "Open Sans", sans-serif; fill: #d9d9d9; stroke: none; }
    .minis { display: grid; row-gap: 17px; padding-top: 18px; grid-auto-rows: 36px; }
    .drop { width: 38px; }
    .draw { width: 483px; } .modify { width: 295px; } .annotation { width: 325px; } .block { width: 177px; } .properties { width: 493px; }
    .groups { width: 154px; } .utilities { width: 215px; } .clipboard { width: 178px; } .view { width: 135px; } .layers { width: 610px; border: 0; }
    .w90 { width: 90px; } .w96 { width: 96px; } .w104 { width: 104px; } .w112 { width: 112px; } .w120 { width: 120px; } .w132 { width: 132px; } .w144 { width: 144px; } .w158 { width: 158px; }
    .two { grid-template-columns: 36px 38px; margin-left: 6px; }
    .draw .two { margin-left: 8px; }
    .annotation .two { margin-left: 12px; }
    .mod { grid-template-columns: 64px 64px 36px 55px 36px; padding-left: 17px; }
    .mod button { justify-self: start; }
    .one { grid-template-columns: 36px; }
    .picks { display: flex; flex-direction: column; padding-top: 9px; }
    .pick { width: 53px; height: 53px; display: flex; align-items: center; justify-content: center; }
    .mini.active { width: 53px; height: 49px; border: 2px solid #67b0e8; background: #44597a; }
    .combos { display: flex; flex-direction: column; gap: 3px; padding: 11px 0 0 3px; flex: 1; font-size: 24px; }
    .combo { display: flex; align-items: center; height: 49px; background: #4f5b6e; border: 3px solid #2e3643; margin-right: 4px; }
    .combo select { height: 43px; }
    .swatch { width: 36px; height: 36px; margin: 0 22px 0 26px; background: #fff; border: 2px solid #b5b5b5; }
    .rule { width: 142px; height: 3px; margin: 0 5px 0 5px; background: #f2f2f2; }
    .layer-tools { display: flex; flex-direction: column; flex: 1; padding-top: 11px; }
    .layer-combo { gap: 6px; margin: 0; }
    .chip-white { width: 32px; height: 32px; margin: 0 5px 0 2px; background: #fff; border: 3px solid #111; }
    .layer-grid { display: grid; grid-template-columns: repeat(5, 36px); grid-auto-rows: 36px; gap: 17px; padding: 11px 0 0 3px; }
  `];
  render() {
    const tabs = ["Home", "Insert", "Annotate", "Parametric", "View", "Manage", "Output", "Add-ins", "Collaborate", "Express Tools", "Featured Apps"];
    const s = small;
    return html`
      <nav class="tabs">
        ${tabs.map((t) => html`<button class=${t === this.active ? "tab on" : "tab"} @click=${() => (this.active = t)}>${t}</button>`)}
        <button class="toggle" aria-label="Minimize ribbon"><span class="chip"><svg width="12" height="8" viewBox="0 0 12 8"><path d="M0 8L6 0L12 8Z" fill="#444"/></svg></span>${arrow(11, 8)}</button>
      </nav>
      <div class="panels">
        ${panel("draw", "Draw", html`
          ${tool("w90", large.line, ["Line"])}
          ${tool("w96", large.polyline, ["Polyline"])}
          ${tool("w112", large.circle, ["Circle"], true)}
          ${tool("w90", large.arc, ["Arc"], true)}
          <div class="minis two">${mini("Rectangle", s.rect)}${drop("Rectangle")}${mini("Ellipse", s.ellipse)}${drop("Ellipse")}${mini("Hatch", s.hatch)}${drop("Hatch")}</div>`)}
        ${panel("modify", "Modify", html`<div class="minis mod">
          ${mini("Move", s.move)}${mini("Rotate", s.rotate)}${mini("Trim", s.trim)}${drop("Trim")}${mini("Erase", s.erase)}
          ${mini("Copy", s.copy)}${mini("Mirror", s.mirror)}${mini("Fillet", s.fillet)}${drop("Fillet")}${mini("Explode", s.box)}
          ${mini("Stretch", s.stretch)}${mini("Scale", s.scale)}${mini("Array", s.array)}${drop("Array")}${mini("Offset", s.offset)}</div>`)}
        ${panel("annotation", "Annotation", html`
          ${tool("w104", large.text, ["Text"], true)}
          ${tool("w132", large.dimension, ["Dimension"])}
          <div class="minis two">${mini("Linear", s.linear)}${drop("Linear")}${mini("Leader", s.leader)}${drop("Leader")}${mini("Table", s.table)}</div>`)}
        ${panel("block", "Block", html`
          ${tool("w96", large.insert, ["Insert"], true)}
          <div class="minis two">${mini("Create block", s.blockNew)}<span></span>${mini("Edit block", s.blockEdit)}<span></span>${mini("Edit attributes", s.tag)}${drop("Attributes")}</div>`)}
        ${panel("properties", "Properties", html`
          ${tool("w144", large.match, ["Match", "Properties"])}
          <div class="minis one">${mini("Color", s.wheel)}${mini("Lineweight", s.weights)}${mini("Linetype", s.types)}</div>
          <div class="combos">
            <div class="combo"><span class="swatch"></span><select aria-label="Object color"><option>ByLayer</option></select>${arrow(18, 12)}</div>
            <div class="combo"><span class="rule"></span><select aria-label="Object lineweight"><option>ByLayer</option></select>${arrow(18, 12)}</div>
            <div class="combo"><span class="rule"></span><select aria-label="Object linetype"><option>ByLayer</option></select>${arrow(18, 12)}</div>
          </div>`, true, true)}
        ${panel("groups", "Groups", html`
          ${tool("w96", large.group, ["Group"])}
          <div class="picks"><span class="pick">${mini("Ungroup", s.ungroup)}</span><span class="pick">${mini("Edit group", s.groupEdit)}</span><span class="pick">${mini("Group selection", s.groupPick, true)}</span></div>`)}
        ${panel("utilities", "Utilities", html`
          ${tool("w158", large.measure, ["Measure"], true)}
          <div class="minis two">${mini("Quick select", s.quick)}<span></span>${mini("Select all", s.selectAll)}<span></span>${mini("Calculator", s.calc)}</div>`)}
        ${panel("clipboard", "Clipboard", html`
          ${tool("w120", large.paste, ["Paste"], true)}
          <div class="minis two">${mini("Cut", s.cut)}<span></span>${mini("Copy to clipboard", s.copyClip)}</div>`, false)}
        ${panel("view", "View", tool("w132", large.base, ["Base"], true), true, true)}
        ${panel("layers", "Layers", html`
          ${tool("w144", large.layers, ["Layer", "Properties"])}
          <div class="layer-tools">
            <div class="combo layer-combo">
              ${icon(svg`<circle cx="18" cy="13" r="11" fill=${Y} stroke="none"/><path d="M12 18H24V22H12Z" fill=${Y} stroke="none"/><path d="M12 25H24L21 34H15Z" fill="#fff" stroke="none"/>`)}
              ${icon(svg`<circle cx="18" cy="18" r="11" fill=${Y} stroke="none"/><path d="M18 1V5M18 31V35M1 18H5M31 18H35M6 5L8 8M30 5L28 8M6 31L8 28M30 31L28 28" stroke=${Y}/>`)}
              ${icon(svg`<rect x="2" y="15" width="26" height="20" fill=${Y} stroke="none"/><path d="M20 15V9Q26 -2 33 8V14" stroke=${Y} stroke-width="3"/><path d="M15 20V29" stroke=${D} stroke-width="3"/>`)}
              <span class="chip-white"></span>
              <select aria-label="Current layer"><option>0</option></select>
            </div>
            <div class="layer-grid">
              ${mini("Layer off", s.layOff)}${mini("Isolate", s.layIso)}${mini("Freeze", s.layFreeze)}${mini("Lock", s.layLock)}${mini("Make current", s.layCurrent)}
              ${mini("Layers on", s.layOn)}${mini("Unisolate", s.layUniso)}${mini("Thaw", s.layThaw)}${mini("Unlock", s.layUnlock)}${mini("Match layer", s.layMatch)}
            </div>
          </div>`)}
      </div>`;
  }
}

@customElement("file-tabs")
class FileTabs extends LitElement {
  static styles = [base, css`
    :host { display: flex; align-items: flex-end; height: 67px; padding-left: 20px; background: #222933; border-bottom: 9px solid #3b4453; font-size: 24px; color: #a9adb5; }
    .tab { height: 48px; padding-top: 4px; }
    .start { width: 296px; padding-left: 43px; justify-content: flex-start; background: #333a47; clip-path: path("M0 48C16 44 20 34 24 18C27 5 30 0 40 0H276C290 0 292 10 292 20V48Z"); }
    .open { display: flex; align-items: center; width: 310px; margin-left: -16px; padding-left: 36px; gap: 28px; background: #3b4453; color: #f2f2f2; font-weight: 700; clip-path: path("M0 48C12 40 14 24 18 12C20 4 24 0 32 0H264C278 0 282 8 286 24C289 38 296 45 310 48Z"); }
    .plus { width: 47px; height: 30px; margin: 0 0 8px -9px; background: #333a47; clip-path: path("M0 0H26C40 2 44 14 47 30H14C4 26 1 12 0 0Z"); }
  `];
  render() {
    return html`
      <button class="tab start">Start</button>
      <div class="tab open"><span>family_house*</span><button aria-label="Close drawing">${icon(svg`<path d="M1 1L20 20M20 1L1 20" stroke="#a9adb3" stroke-width="4"/>`, 21)}</button></div>
      <button class="plus" aria-label="New drawing">${icon(svg`<path d="M9 0V18M0 9H18" stroke="#a9adb3" stroke-width="3"/>`, 18)}</button>`;
  }
}

@customElement("property-palette")
class PropertyPalette extends LitElement {
  @state() private closed: string[] = [];
  static styles = [base, css`
    :host { display: block; flex: none; width: 644px; background: #3b4453; font-size: 25px; color: #c3c6cb; padding-top: 3px; }
    .head { margin: 0 4px 24px 0; height: 51px; padding-left: 25px; background: #2d333f; color: #e4e4e4; font-size: 25px; font-weight: 400; line-height: 48px; }
    .pick { display: flex; align-items: center; gap: 11px; margin: 0 25px 11px 32px; height: 51px; }
    .combo { display: flex; align-items: center; flex: 1; height: 51px; padding: 0 5px 0 6px; margin-right: 3px; background: #4f5b6e; border: 2px solid #2f3643; color: #e0e0e0; }
    .combo select { height: 46px; }
    .section { margin: 0 30px 5px 31px; }
    .bar { width: 100%; height: 47px; justify-content: space-between; padding: 0 17px 3px 15px; background: #2d333f; color: #f4f4f4; font-weight: 700; }
    table { border-collapse: collapse; table-layout: fixed; width: 544px; margin-left: 39px; }
    th, td { height: 46px; border: 2px solid #2f3643; border-top: 0; font-weight: 400; text-align: left; white-space: nowrap; padding: 0 0 4px 5px; line-height: 34px; overflow: hidden; }
    th { width: 330px; padding-left: 12px; }
    td { color: #e4e4e4; }
    td.dim { color: #8f96a1; }
    .val { display: flex; align-items: center; }
    .swatch { width: 30px; height: 31px; margin-right: 14px; border: 3px solid #151515; border-radius: 3px; background: #fff; }
    .short { width: 80px; height: 3px; margin: 0 12px 0 10px; background: #f2f2f2; }
    .long { width: 92px; height: 3px; margin: 0 8px 0 0; background: #f2f2f2; }
  `];
  private toggle(n: string) {
    this.closed = this.closed.includes(n) ? this.closed.filter((c) => c !== n) : [...this.closed, n];
  }
  render() {
    return html`
      <h2 class="head">PROPERTIES</h2>
      <div class="pick">
        <div class="combo"><select aria-label="Selection"><option>No selection</option></select>${arrow(24, 14)}</div>
        <button aria-label="Add to selection">${icon(svg`<rect x="0" y="4" width="18" height="20" fill=${B} stroke="none"/><rect x="12" y="16" width="20" height="21" fill=${B} stroke=${D}/><path d="M27 0V16M19 8H35" stroke="#7bd695" stroke-width="5"/>`)}</button>
        <button aria-label="Select objects">${icon(svg`<rect x="1" y="1" width="27" height="20" fill="#7bd695" stroke="#3c8d55" stroke-dasharray="4 2"/>${cursor(22, 13)}`)}</button>
        <button aria-label="Quick select">${icon(small.quick)}</button>
      </div>
      ${sections.map((s) => html`
        <section class="section">
          <button class="bar" aria-expanded=${this.closed.includes(s.name) ? "false" : "true"} @click=${() => this.toggle(s.name)}><span>${s.name}</span>${arrow(18, 10)}</button>
          ${this.closed.includes(s.name) ? nothing : html`<table aria-label=${s.name}><tbody>
            ${s.rows.map((r) => html`<tr><th scope="row">${r.name}</th><td class=${r.dim ? "dim" : ""}><span class="val">${r.mark ? html`<span class=${r.mark}></span>` : nothing}${r.value}</span></td></tr>`)}
          </tbody></table>`}
        </section>`)}`;
  }
}

@customElement("drawing-area")
class DrawingArea extends LitElement {
  static styles = [base, css`
    :host { display: block; position: relative; flex: 1; min-width: 0; background: #000; overflow: hidden; }
    .plan { width: 100%; height: auto; }
    .line { stroke: #00d4d8; }
    .furniture { stroke: #7d3d00; }
    .sanitary { stroke: #333; }
    .axis { font: 300 40px "Open Sans", sans-serif; fill: #d0d0d0; }
    .doc { position: absolute; top: 20px; right: 0; display: flex; align-items: center; gap: 20px; }
    .doc .min { width: 25px; height: 8px; background: #ececec; }
    .doc .restore { width: 19px; height: 24px; background: #ececec; overflow: hidden; }
    .nav { position: absolute; top: 76px; right: -40px; width: 302px; display: flex; flex-direction: column; align-items: center; gap: 40px; }
    .compass { font: 700 48px "Liberation Sans", Arial, sans-serif; fill: #9b9da1; }
    .top { font: 700 31px "Liberation Sans Narrow", "Open Sans Condensed", "Open Sans", sans-serif; fill: #454a50; }
    .wcs { width: 102px; height: 38px; gap: 12px; border: 3px solid #777b85; border-radius: 9px; background: #8f939d; color: #55534f; font: 23px "Liberation Sans", Arial, sans-serif; }
    .scroll { position: absolute; right: 0; top: 505px; width: 5px; height: 460px; border-radius: 4px 0 0 4px; background: #4a4a4a; }
    .command { position: absolute; left: 1241px; right: 0; bottom: 0; height: 59px; display: flex; align-items: center; padding: 2px 0 2px 18px; background: #212530; border-radius: 8px 0 0 0; }
    .grip { width: 4px; height: 40px; margin-right: 14px; background: repeating-linear-gradient(#d0d0d0 0 4px, transparent 4px 7px); }
    .close { margin-right: 22px; }
    .wrench { margin-right: 12px; }
    .field { flex: 1; display: flex; align-items: center; height: 54px; padding-left: 9px; background: #b1b1b1; border-radius: 6px 0 0 0; }
    .prompt { gap: 5px; margin-right: 14px; }
    .field input { flex: 1; height: 50px; min-width: 0; color: #333; font: italic 27px "DejaVu Sans Mono", "Liberation Mono", monospace; }
    .field input::placeholder { color: #5a5a5a; opacity: 1; }
  `];
  render() {
    return html`
      ${plan}
      <div class="doc"><button class="min" aria-label="Minimize drawing"></button><button class="restore" aria-label="Restore drawing">${icon(svg`<rect x="6" y="8" width="9" height="9" fill="#000" stroke="none"/>`, 19, 24)}</button></div>
      <div class="nav">
        <svg width="302" height="302" viewBox="-151 -151 302 302" role="img" aria-label="View cube">
          <circle r="116" fill="none" stroke="#262626" stroke-width="28"/>
          <rect x="-55" y="-55" width="110" height="110" fill="#a3a3a0" stroke="#686a70" stroke-width="3"/>
          <rect x="-35" y="-35" width="71" height="71" fill="#94989b"/>
          <text class="top" x="0" y="12" text-anchor="middle">TOP</text>
          <g class="compass" text-anchor="middle"><text y="-103">N</text><text y="141">S</text><text x="-121" y="19">W</text><text x="126" y="19">E</text></g>
        </svg>
        <button class="wcs">WCS<svg width="20" height="11" viewBox="0 0 20 11"><path d="M1 1H19L10 10Z" fill="#a9acb3" stroke="#777b85"/></svg></button>
      </div>
      <span class="scroll"></span>
      <div class="command">
        <span class="grip"></span>
        <button class="close" aria-label="Close command line">${icon(svg`<path d="M2 2L19 19M19 2L2 19" stroke="#b9b9b9" stroke-width="4"/>`, 21)}</button>
        <button class="wrench" aria-label="Customize">${icon(svg`<path d="M3 33L20 15" stroke="#b9b9b9" stroke-width="6" stroke-linecap="round"/><path d="M26 1Q17 2 17 11Q18 19 26 18Q34 17 33 8L27 13L22 10L21 6Z" fill="#b9b9b9" stroke="none"/>`, 35)}</button>
        <div class="field">
          <button class="prompt" aria-label="Recent commands">${icon(svg`<rect x="1" y="1" width="33" height="25" fill="#a4a6a8" stroke="#555"/><path d="M1 1H34V8H1Z" fill="#444" stroke="none"/><path d="M4 11L9 15L4 19M11 20H19" stroke="#333"/><rect x="3" y="3" width="3" height="3" fill="#fff" stroke="none"/>`, 35, 27)}<svg width="17" height="10" viewBox="0 0 17 10"><path d="M0 0H17L8 10Z" fill="#484848"/></svg></button>
          <input type="text" aria-label="Command" placeholder="Type a command">
        </div>
      </div>`;
  }
}

const mark = svg`<path d="M18 2L22 16L22 22L33 34V37L18 31L3 37V34L14 22V16Z" stroke="none"/>`;

@customElement("status-bar")
class StatusBar extends LitElement {
  static styles = [base, css`
    :host { display: flex; justify-content: space-between; height: 67px; background: #222933; border-top: 4px solid #3f464c; font-size: 25px; color: #f0f0f0; overflow: hidden; }
    .layouts { display: flex; align-items: flex-start; margin-top: -4px; color: #a4a8b0; }
    .layout { height: 46px; padding: 0 15px 2px; }
    .layout.on { width: 164px; background: #3b4453; color: #f4f4f4; font-weight: 700; clip-path: path("M0 0H164C152 4 150 20 146 34C143 42 140 46 130 46H30C20 46 17 40 14 28C11 12 10 4 0 0Z"); }
    .layout.other { width: 230px; margin-left: -8px; background: #2b323e; border-radius: 0 0 24px 24px; }
    .layout.add { width: 56px; height: 40px; margin-left: 16px; background: #2b323e; border-radius: 0 0 20px 16px; }
    .groups { display: flex; padding-top: 2px; }
    .group { display: flex; height: 54px; margin-right: 9px; background: #3b4453; box-shadow: inset 0 0 0 1px #2c3440; }
    .group.near { margin-right: 3px; }
    .group.mid { margin-right: 6px; }
    .group.last { margin: 0; }
    .c34 { width: 34px; } .c36 { width: 36px; } .c38 { width: 38px; } .c41 { width: 41px; } .c50 { width: 50px; }
    .c52 { width: 52px; } .c54 { width: 54px; } .c56 { width: 56px; } .c60 { width: 60px; } .c64 { width: 64px; }
    .model { width: 107px; font-weight: 600; } .scale { width: 75px; gap: 11px; font-weight: 600; }
    .on-cell { background: #5d8fc1; }
  `];
  render() {
    const c = (cls: string, name: string, b: unknown, w = 36, h = 38) => html`<button class=${cls} aria-label=${name}>${icon(b, w, h)}</button>`;
    const d = (cls: string, name: string) => html`<button class=${cls} aria-label=${name}>${arrow(16, 9)}</button>`;
    const teeth = [0, 45, 90, 135, 180, 225, 270, 315].map((a) => svg`<rect x="-4" y="-18" width="8" height="8" transform="rotate(${a})"/>`);
    return html`
      <nav class="layouts">
        <button class="layout on">Model</button><button class="layout other">dwgmodels.com</button>
        <button class="layout add" aria-label="New layout">${icon(svg`<path d="M9 0V18M0 9H18" stroke="#a9adb3" stroke-width="3"/>`, 18)}</button>
      </nav>
      <div class="groups">
        <div class="group"><button class="model">MODEL</button></div>
        <div class="group">
          ${c("c52", "Grid", svg`<path d="M9 1V37M18 1V37M27 1V37M1 9H35M1 18H35M1 28H35"/>`)}
          ${c("c52", "Snap", svg`<path d="M5 8H32M5 19H32M5 30H32" stroke-width="5" stroke-dasharray="5 6"/>`)}
          ${d("c38", "Snap list")}
        </div>
        <div class="group near">
          ${c("c50 on-cell", "Ortho", svg`<path d="M1 1V37H36M1 26H11V37" stroke="#fff"/>`)}
          ${c("c56", "Polar", svg`<ellipse cx="15" cy="21" rx="14" ry="14"/><path d="M36 20H15L30 4"/>`)}
          ${d("c36", "Polar list")}
          ${c("c50", "Isodraft", svg`<path d="M18 0V34" stroke=${N} stroke-width="3"/><path d="M4 4L31 31" stroke="#c4705a"/><rect x="15" y="15" width="6" height="5" stroke="#fff"/>`)}
          ${d("c38", "Isodraft list")}
        </div>
        <div class="group near">
          ${c("c54", "Tracking", svg`<path d="M27 6L2 33H36"/><rect x="11" y="17" width="6" height="6" fill="#fff" stroke="none"/>`)}
          ${c("c50 on-cell", "Object snap", svg`<rect x="1" y="1" width="9" height="10" stroke="#fff"/><path d="M12 6H35V37H5V13" stroke="#fff"/>`)}
          ${d("c38", "Object snap list")}
        </div>
        <div class="group">${c("c52", "Lineweight display", svg`<path d="M0 7H36M0 17H36M0 27H36"/><path d="M0 9H19M0 19H19M0 30H19" stroke-width="6"/>`)}</div>
        <div class="group">
          ${c("c50 on-cell", "Annotation visibility", svg`<g fill="#fff" transform="translate(-3 0)">${mark}</g><circle cx="29" cy="9" r="6" stroke="#fff"/>`)}
          ${c("c52", "Auto scale", svg`<g fill=${G} transform="translate(-2 0)">${mark}</g><path d="M32 2L25 11H29L26 18L35 9H31Z" fill="#fff" stroke="none"/>`)}
          ${c("c56", "Annotation scale list", svg`<g fill=${G}>${mark}</g>`)}
          <button class="scale">1:1${arrow(16, 9)}</button>
        </div>
        <div class="group near">
          ${c("c54", "Workspace", svg`<g transform="translate(18 19)" fill=${G} stroke="none">${teeth}</g><circle cx="18" cy="19" r="10" stroke-width="7"/>`)}
          ${d("c34", "Workspace list")}
        </div>
        <div class="group">${c("c54", "Monitor", svg`<path d="M18 2V36M1 19H35" stroke-width="4"/>`)}</div>
        <div class="group mid">${c("c54", "Isolate objects", svg`<rect x="1" y="2" width="14" height="13"/><circle cx="28" cy="17" r="8"/><path d="M14 24L22 36H6Z"/>`)}</div>
        <div class="group mid">
          ${c("c64", "Graphics performance", svg`<path d="M0 0H30L44 14V30L32 42H0Z" fill="#2c5fa8" stroke="none"/><path d="M30 0V14H44Z" fill="#6f9cc4" stroke="none"/><path d="M0 12H28M12 0V30" stroke="#b9d8ee" stroke-width="4"/><circle cx="12" cy="12" r="5" fill="#2c5fa8" stroke="#dff"/><path d="M0 32H21L17 40L21 48H0Z" fill="#f8ac35" stroke="none"/><path d="M22 42L32 50L50 32" stroke="#4fae68" stroke-width="7"/>`, 52, 54)}
          ${c("c60", "Hardware status", svg`<rect x="1" y="1" width="34" height="35" fill=${G} stroke="none"/><path d="M2 26Q12 -8 22 22Q28 36 34 10" stroke="#555"/><rect x="10" y="6" width="5" height="5" fill=${B} stroke="none"/><path d="M27 18L36 38H17Z" fill="#f2c07a" stroke="none"/><path d="M27 25V35" stroke="#fff"/>`)}
        </div>
        <div class="group last">${c("c41", "Full screen", svg`<path d="M34 5H2V32H34"/><path d="M4 29V21L12 29ZM32 8V16L24 8Z" fill=${G} stroke="none"/>`, 34, 38)}</div>
      </div>`;
  }
}

@customElement("app-root")
class AppRoot extends LitElement {
  static styles = css`
    :host { display: flex; flex-direction: column; min-height: 100vh; background: #222933; font-family: "Open Sans", "Noto Sans", sans-serif; overflow: hidden; }
    .work { display: flex; flex: 1; }
  `;
  render() {
    return html`
      <title-bar></title-bar>
      <ribbon-bar></ribbon-bar>
      <file-tabs></file-tabs>
      <main class="work"><property-palette></property-palette><drawing-area></drawing-area></main>
      <status-bar></status-bar>`;
  }
}
